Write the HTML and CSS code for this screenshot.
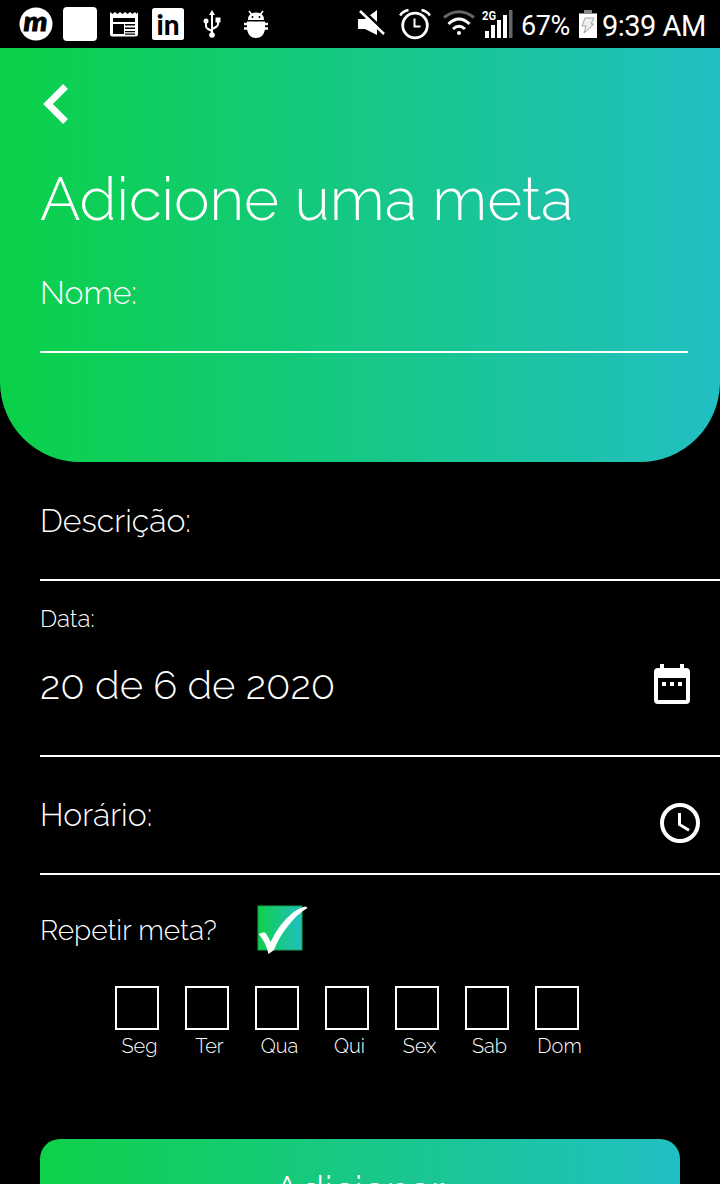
FILE: index.html
```html
<!DOCTYPE html>
<html lang="pt-BR">
<head>
<meta charset="utf-8">
<title>Adicione uma meta</title>
<link rel="stylesheet" href="styles.css">
</head>
<body>
<div class="status">
  <div class="status-left">
    <svg width="34" height="34" viewBox="0 0 34 34"><circle cx="17" cy="17" r="16.5" fill="#fff"/><text class="m-logo" x="4.500" y="24" textLength="24" lengthAdjust="spacingAndGlyphs">m</text></svg>
    <span class="blank-app"></span>
    <svg width="28" height="34" viewBox="0 0 28 34" fill="#fff"><path fill-rule="evenodd" d="M0 5l2.500 2L5 5l2.500 2L10 5l2.500 2L15 5l2.500 2L20 5l2.500 2L25 5l1.500 2L28 5v22q0 2.500-2.500 2.500h-23Q0 29.500 0 27zM3 11v4h22v-4zM3 17v10h11V17zM15 17v1.500h10V17zM15 20.500V22h10v-1.500zM15 24v1.300h10V24zM15 26.500V27.700h10v-1.200z"/></svg>
    <svg width="32" height="34" viewBox="0 0 32 34"><rect y="1" width="32" height="32" rx="2.500" fill="#fff"/><text class="in-logo" x="4.500" y="27.500" textLength="23" lengthAdjust="spacingAndGlyphs">in</text></svg>
    <svg width="18" height="34" viewBox="0 0 18 34"><path d="M9 8v19M3 15v4q0 2 2 3l4 2M15 15v2q0 2-2 3l-4 2" fill="none" stroke="#fff" stroke-width="2"/><path d="M9 3l3 5H6zM12.500 10.500h5v5h-5z" fill="#fff"/><circle cx="3" cy="14" r="2.500" fill="#fff"/><circle cx="9" cy="28" r="2.800" fill="#fff"/></svg>
    <svg width="24" height="34" viewBox="0 0 24 34" fill="#fff"><path d="M4 13q0-7.500 8-7.500t8 7.500zM3 14.500h18v8q-1.500 8.500-9 8.500t-9-8.500z"/><path d="M0 17h24M0 21.500h24" stroke="#fff" stroke-width="2.400"/><path d="M5 4l3 4m11-4l-3 4" stroke="#fff" stroke-width="1.600"/><circle cx="8.500" cy="10" r="1" fill="#000"/><circle cx="15.500" cy="10" r="1" fill="#000"/></svg>
  </div>
  <div class="status-right">
    <svg class="mute" width="28" height="34" viewBox="0 0 28 34"><path d="M0 12h7l12-9v25L7 22H0z" fill="#fff"/><path d="M4 2.500l24 23" stroke="#000" stroke-width="3"/><path d="M2 4l24 23" stroke="#fff" stroke-width="2.500"/></svg>
    <svg class="alarm" width="32" height="34" viewBox="0 0 32 34" fill="none" stroke="#fff"><circle cx="16" cy="18.500" r="12.300" stroke-width="2.800"/><path d="M15.500 11.500v8h6" stroke-width="2"/><path d="M1 8.500Q4 4 9.500 3M31 8.500Q28 4 22.500 3" stroke-width="2.600"/></svg>
    <svg class="wifi" width="32" height="34" viewBox="0 0 32 34" fill="none" stroke-width="3"><path d="M1 10.500Q16-1 31 10.500" stroke="#666"/><path d="M5.500 17Q16 7 26.500 17M10 22Q16 16.500 22 22" stroke="#fff"/><circle cx="16" cy="26" r="2" fill="#fff"/></svg>
    <svg class="signal" width="31" height="34" viewBox="0 0 31 34" fill="#fff"><text class="net" x="0" y="12.500" textLength="14" lengthAdjust="spacingAndGlyphs">2G</text><path d="M3 24h4v7H3zM9 18h4v13H9zM15 13h4v18h-4zM21 8h4v23h-4z"/><path d="M27 3h3.500v28H27z" fill="#666"/></svg>
    <span class="percent">67%</span>
    <svg class="battery" width="18" height="34" viewBox="0 0 18 34"><path d="M5 3h8v3h5v4H0V6h5z" fill="#888"/><path d="M0 7h18v24H0z" fill="#fff"/><path d="M6 11h9l-3 6h3L5 26l2-7H3z" fill="#eee" stroke="#999" stroke-width=".9"/></svg>
    <span class="time">9:39 AM</span>
  </div>
</div>

<header class="hero">
  <svg class="back" width="28" height="42" viewBox="0 0 28 42"><path d="M25.500 3.500L8 21l17.500 17.500" fill="none" stroke="#fff" stroke-width="6.800"/></svg>
  <h1 class="title">Adicione uma meta</h1>
  <div class="field name"><span class="label">Nome:</span></div>
</header>

<main class="form">
  <div class="field desc"><span class="label">Descrição:</span></div>
  <div class="field date">
    <span class="caption">Data:</span>
    <div class="date-row">
      <span class="value">20 de 6 de 2020</span>
      <svg width="36" height="40" viewBox="0 0 36 40"><path fill="#fff" fill-rule="evenodd" d="M6 0h4v4h16V0h4v4h2q4 0 4 4v28q0 4-4 4H4q-4 0-4-4V8q0-4 4-4h2zM4 14v22h28V14zM8 18h4v4H8zM16 18h4v4h-4zM24 18h4v4h-4z"/></svg>
    </div>
  </div>
  <div class="field hour">
    <span class="label">Horário:</span>
    <svg width="40" height="40" viewBox="0 0 40 40" fill="none" stroke="#fff"><circle cx="20" cy="20" r="18" stroke-width="4"/><path d="M19.500 10v11.500l9.500 5.700" stroke-width="3"/></svg>
  </div>
  <div class="repeat">
    <span class="question">Repetir meta?</span>
    <svg width="52" height="50" viewBox="0 0 52 50"><defs><linearGradient id="g"><stop stop-color="#0ed04c"/><stop offset="1" stop-color="#22bfc1"/></linearGradient></defs><rect x="1" y="2" width="44" height="44" fill="url(#g)" stroke="#14a342"/><path d="M1.500 30.500Q4 28 8 28.500Q11 32 13.500 38Q22 20 36 8.500Q44 3 49 2.500L50.500 4Q40 10 31 22Q22 33 17 46L11.500 50Q9 39 2.500 31z" fill="#fff"/></svg>
  </div>
  <div class="days">
    <div class="day"><i class="box"></i><span>Seg</span></div>
    <div class="day"><i class="box"></i><span>Ter</span></div>
    <div class="day"><i class="box"></i><span>Qua</span></div>
    <div class="day"><i class="box"></i><span>Qui</span></div>
    <div class="day"><i class="box"></i><span>Sex</span></div>
    <div class="day"><i class="box"></i><span>Sab</span></div>
    <div class="day"><i class="box"></i><span>Dom</span></div>
  </div>
  <button class="submit">Adicionar</button>
</main>
</body>
</html>
```

FILE: styles.css
```css
* { box-sizing: border-box; }
html, body { height: 1184px; overflow: hidden; }
body {
  margin: 0;
  background: #000;
  color: #fff;
  font-family: Raleway, Lato, sans-serif;
  font-weight: 300;
}
svg { display: block; flex: none; }

.status {
  height: 48px;
  display: flex;
  justify-content: space-between;
  padding: 7px 13px 0 19px;
  font-family: Roboto, sans-serif;
  font-weight: 400;
}
.status-left { display: flex; }
.status-left > * { flex: none; }
.status-left > :nth-child(2) { margin-left: 10px; }
.status-left > :nth-child(3) { margin-left: 13px; }
.status-left > :nth-child(4) { margin-left: 14px; }
.status-left > :nth-child(5) { margin-left: 19px; }
.status-left > :nth-child(6) { margin-left: 23px; }
.blank-app { width: 34px; height: 34px; border-radius: 4px; background: #fff; }
.m-logo { font: italic 900 26px Lato, sans-serif; stroke: #000; stroke-width: .8; }
.in-logo { font: 900 29px Lato, sans-serif; }
.net { font: 700 12px Roboto, sans-serif; }
.status-right { display: flex; width: 349px; white-space: nowrap; }
.status-right > * { flex: none; }
.alarm { margin-left: 13px; }
.wifi { margin-left: 12px; }
.signal { margin-left: 7px; }
.percent { width: 50px; margin-left: 8px; font-size: 27px; line-height: 38px; letter-spacing: -.4px; }
.battery { margin-left: 8px; }
.time { margin-left: 5px; font-size: 29px; line-height: 38px; letter-spacing: -.5px; }

.hero {
  height: 414px;
  padding: 35px 32px 0 40px;
  border-radius: 0 0 80px 80px;
  background: linear-gradient(90deg, #0ad147 0%, #22bfc3 100%);
}
.title {
  margin: 38px 0 0;
  font-size: 60px;
  line-height: 72px;
  font-weight: 300;
  white-space: nowrap;
}
.field { border-bottom: 2px solid #fff; }
.label { font-size: 32px; line-height: 40px; }
.name { height: 80px; margin-top: 38px; }
.name .label, .desc .label { display: block; }

.form { padding: 39px 0 0 40px; }
.desc { height: 80px; }
.date { height: 176px; padding-top: 23px; }
.caption { display: block; font-size: 24px; line-height: 30px; }
.date-row { display: flex; justify-content: space-between; margin-top: 30px; padding-right: 30px; }
.value { margin-top: -2px; font-size: 40px; line-height: 46px; }
.hour { height: 118px; display: flex; justify-content: space-between; padding: 38px 20px 0 0; }
.hour svg { margin-top: 8px; }
.repeat { display: flex; height: 50px; margin-top: 29px; }
.question { width: 217px; font-size: 28px; line-height: 54px; white-space: nowrap; }
.days { display: flex; gap: 20px; margin: 32px 0 0 75px; }
.day { width: 50px; }
.box { display: block; width: 44px; height: 44px; border: 2px solid #fff; }
.day span { display: block; margin-right: 1px; font-size: 20px; line-height: 32px; text-align: center; }
.submit {
  display: block;
  width: 640px;
  height: 104px;
  margin-top: 77px;
  padding: 0 2px 3px 0;
  border: 0;
  border-radius: 20px;
  background: linear-gradient(90deg, #0ed14a, #22bfc3);
  color: #fff;
  font: inherit;
  font-size: 40px;
  line-height: 46px;
}
```
